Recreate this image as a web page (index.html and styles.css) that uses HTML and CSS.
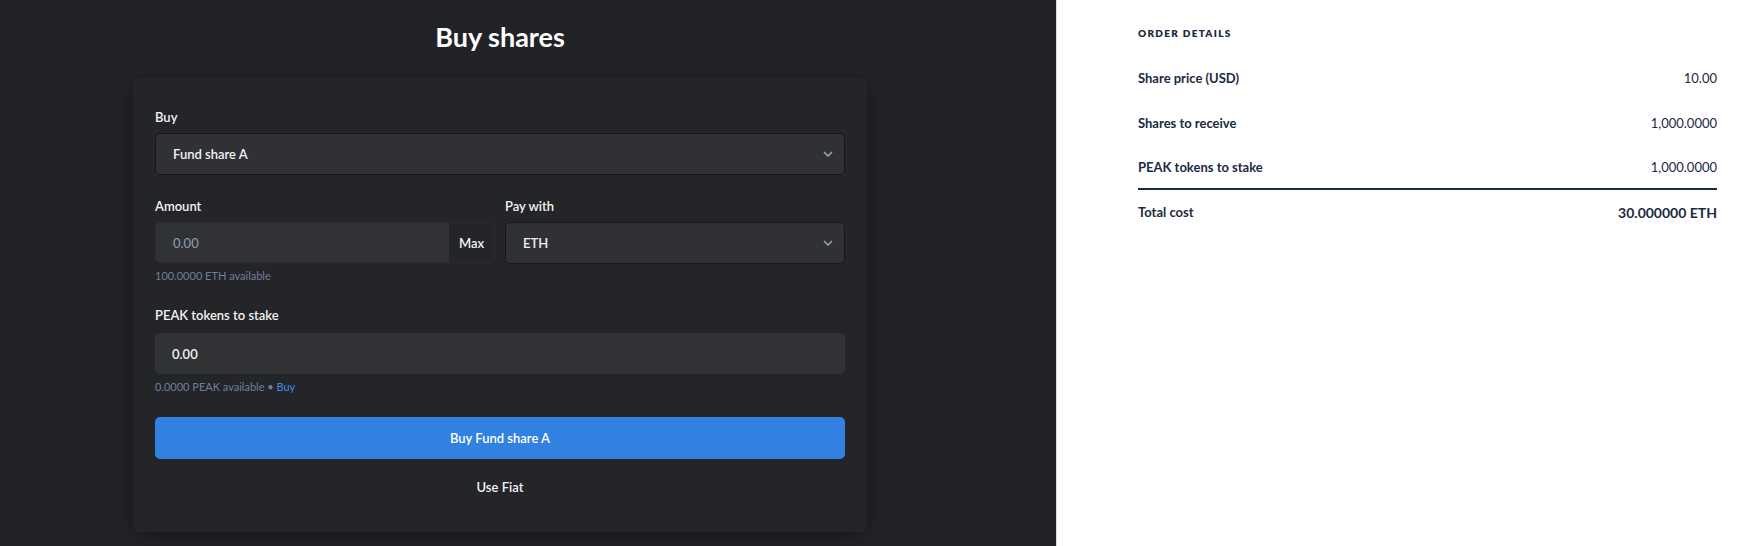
FILE: index.html
```html
<!DOCTYPE html>
<html lang="en">
  <head>
    <meta charset="UTF-8" />
    <meta name="viewport" content="width=device-width, initial-scale=1.0" />
    <title>Buy shares</title>
    <link rel="stylesheet" href="styles.css">
  </head>
  <body>
    <div class="page">
      <!-- Formulario de compra -->
      <div class="main">
        <div class="column">
          <h1>Buy shares</h1>

          <div class="card">
            <label class="label">Buy</label>
            <div class="select">
              <span>Fund share A</span>
              <svg class="chevron" width="10" height="6" viewBox="0 0 10 6"><path d="M1 1l4 4 4-4" fill="none" stroke="#9aa6bb" stroke-width="1.5"/></svg>
            </div>

            <div class="row-2">
              <div class="field">
                <label class="label">Amount</label>
                <div class="input amount">
                  <span class="placeholder">0.00</span>
                  <button class="max">Max</button>
                </div>
                <p class="hint">100.0000 ETH available</p>
              </div>
              <div class="field">
                <label class="label">Pay with</label>
                <div class="select">
                  <span>ETH</span>
                  <svg class="chevron" width="10" height="6" viewBox="0 0 10 6"><path d="M1 1l4 4 4-4" fill="none" stroke="#9aa6bb" stroke-width="1.5"/></svg>
                </div>
              </div>
            </div>

            <label class="label peak-label">PEAK tokens to stake</label>
            <div class="input">
              <span>0.00</span>
            </div>
            <p class="hint">0.0000 PEAK available &bull; <a href="#">Buy</a></p>

            <button class="buy">Buy Fund share A</button>
            <div class="fiat">Use Fiat</div>
          </div>
        </div>
      </div>

      <!-- Detalle de la orden -->
      <div class="details">
        <h2>Order details</h2>
        <div class="line">
          <span>Share price (USD)</span>
          <span class="value">10.00</span>
        </div>
        <div class="line">
          <span>Shares to receive</span>
          <span class="value">1,000.0000</span>
        </div>
        <div class="line last">
          <span>PEAK tokens to stake</span>
          <span class="value">1,000.0000</span>
        </div>
        <div class="line total">
          <span>Total cost</span>
          <span class="value">30.000000 ETH</span>
        </div>
      </div>
    </div>
  </body>
</html>
```

FILE: styles.css
```css
* {
  box-sizing: border-box;
}

body {
  font-family: Lato, "Liberation Sans", sans-serif;
  margin: 0;
  padding: 0;
  background-color: #ffffff;
}

.page {
  display: flex;
  height: 100vh;
}

.main {
  width: 1056px;
  background-color: #222326;
  padding: 20px 0 0 133px;
  color: #f2f2f4;
}

.column {
  width: 734px;
}

h1 {
  margin: 0 0 24px;
  text-align: center;
  font-size: 27px;
  line-height: 34px;
  font-weight: 700;
  color: #ffffff;
}

.card {
  background-color: #242528;
  border-radius: 8px;
  padding: 31px 22px 35px;
  box-shadow: 0 4px 18px rgba(0, 0, 0, 0.3);
}

.label {
  display: block;
  font-size: 13px;
  line-height: 16px;
  font-weight: 600;
  margin-bottom: 8px;
}

.select {
  display: flex;
  align-items: center;
  justify-content: space-between;
  height: 42px;
  padding: 0 11px 0 17px;
  background-color: #303134;
  border: 1px solid #17181a;
  border-radius: 5px;
  font-size: 13px;
  font-weight: 600;
}

.row-2 {
  display: grid;
  grid-template-columns: 1fr 1fr;
  gap: 10px;
  margin-top: 23px;
}

.input {
  display: flex;
  align-items: center;
  height: 41px;
  padding-left: 17px;
  background-color: #313235;
  border-radius: 5px;
  font-size: 13px;
  font-weight: 600;
}

.amount {
  border: 1px solid #2b2c2f;
  justify-content: space-between;
  overflow: hidden;
}

.placeholder {
  color: #8797b0;
  font-weight: 500;
}

.max {
  height: 100%;
  width: 45px;
  border: none;
  background-color: #242528;
  color: #f2f2f4;
  font-family: inherit;
  font-size: 13px;
  font-weight: 600;
  padding: 0;
}

.hint {
  margin: 6px 0 0;
  font-size: 11px;
  line-height: 14px;
  color: #6f7f98;
}

.hint a {
  color: #3a8ee8;
  text-decoration: none;
}

.peak-label {
  margin-top: 24px;
  margin-bottom: 10px;
}

.buy {
  display: block;
  width: 100%;
  height: 42px;
  margin-top: 23px;
  border: none;
  border-radius: 5px;
  background-color: #3180e2;
  color: #ffffff;
  font-family: inherit;
  font-size: 13px;
  font-weight: 600;
}

.fiat {
  margin-top: 18px;
  text-align: center;
  font-size: 13px;
  line-height: 20px;
  font-weight: 600;
}

.details {
  flex: 1;
  border-left: 1px solid #dcdcdc;
  padding: 25px 25px 0 81px;
  color: #1b2a41;
}

h2 {
  margin: 0 0 14px;
  font-size: 10px;
  line-height: 16px;
  font-weight: 800;
  letter-spacing: 1.3px;
  text-transform: uppercase;
}

.line {
  display: flex;
  justify-content: space-between;
  align-items: center;
  height: 45px;
  font-size: 13px;
  font-weight: 700;
}

.line .value {
  font-weight: 400;
}

.line.last {
  border-bottom: 2px solid #1b2a41;
}

.line.total {
  height: 44px;
}

.line.total .value {
  font-size: 14px;
  font-weight: 700;
}
```
